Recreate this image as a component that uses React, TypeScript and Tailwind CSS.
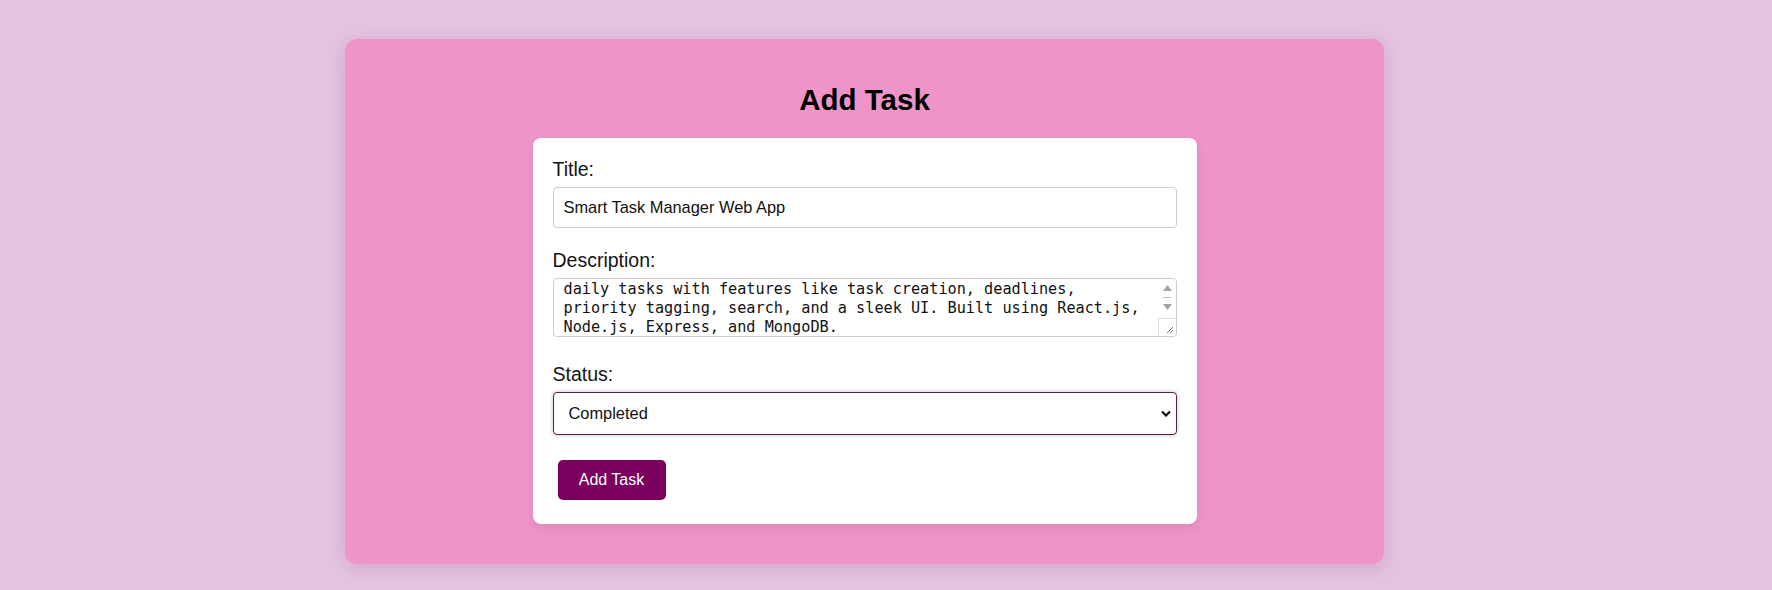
import { useEffect, useRef } from "react";

const description =
  "A full-stack web application that helps users organize their daily tasks with features like task creation, deadlines, priority tagging, search, and a sleek UI. Built using React.js, Node.js, Express, and MongoDB.";

export default function App() {
  const descRef = useRef<HTMLTextAreaElement>(null);

  // textarea is scrolled down one line in the screenshot
  useEffect(() => {
    if (descRef.current) descRef.current.scrollTop = 28;
  }, []);

  return (
    <div className="min-h-[590px] bg-[#e4c3e1] pl-[345px] pt-[39px] pb-[26px] font-['Liberation_Sans',Arial,sans-serif]">
      {/* Tarjeta rosa */}
      <div className="w-[1039px] rounded-xl bg-[#ee94c8] pt-[44px] pb-[40px] shadow-[0_4px_18px_rgba(120,40,100,0.18)]">
        <h2 className="text-center text-[29.5px] font-bold leading-[34px] text-black">Add Task</h2>

        {/* Formulario */}
        <form className="mx-auto mt-[21px] w-[664px] rounded-lg bg-white px-5 pt-5 pb-6 shadow-[0_4px_10px_rgba(0,0,0,0.08)]">
          <label className="block text-[19.5px] leading-[22px] text-[#141414]">Title:</label>
          <input
            type="text"
            defaultValue="Smart Task Manager Web App"
            className="mt-[7px] block h-[41px] w-full rounded-[4px] border border-[#cccccc] bg-white px-[10px] text-[16.4px] text-[#111] outline-none"
          />

          <label className="mt-[21px] block text-[19.5px] leading-[22px] text-[#141414]">Description:</label>
          <div className="relative mt-[7px] h-[59px]">
            <textarea
              ref={descRef}
              defaultValue={description}
              className="block h-[59px] w-full resize-none overflow-hidden rounded-[4px] border border-[#cccccc] bg-white py-[10px] pl-[10px] pr-[27px] font-['DejaVu_Sans_Mono',monospace] text-[15.2px] leading-[19px] text-[#111] outline-none [scrollbar-width:none]"
            />
            {/* Barra de scroll */}
            <div className="absolute top-[1px] right-[1px] bottom-[1px] flex w-[17px] flex-col items-center rounded-r-[3px] bg-white">
              <svg width="9" height="6" viewBox="0 0 9 6" className="mt-[6px]">
                <path d="M0 6 L4.5 0 L9 6 Z" fill="#a3a3a3" />
              </svg>
              <div className="mt-[6px] h-px w-[8px] bg-[#bdbdbd]" />
              <svg width="9" height="6" viewBox="0 0 9 6" className="mt-[6px]">
                <path d="M0 0 L4.5 6 L9 0 Z" fill="#a3a3a3" />
              </svg>
              <div className="mt-auto flex h-[18px] w-[18px] items-end justify-end border-t border-l border-[#dcdcdc]">
                <svg width="8" height="8" viewBox="0 0 8 8" className="mb-[2px] mr-[2px]">
                  <path d="M1 7 L7 1 M4 7 L7 4" stroke="#7a7a7a" strokeWidth="1" />
                </svg>
              </div>
            </div>
          </div>

          <label className="mt-[26px] block text-[19.5px] leading-[22px] text-[#141414]">Status:</label>
          <div className="relative mt-[7px] h-[43px]">
            <select
              defaultValue="Completed"
              className="block h-[43px] w-full appearance-none rounded-[4px] border border-[#5a1f4e] bg-white pl-[15px] text-[16.4px] text-[#111] shadow-[0_0_4px_rgba(0,0,0,0.25)] outline-none"
            >
              <option>Pending</option>
              <option>In Progress</option>
              <option>Completed</option>
            </select>
            <svg width="10" height="7" viewBox="0 0 10 7" className="pointer-events-none absolute top-[18px] right-[6px]">
              <path d="M1 1.5 L5 5.5 L9 1.5" fill="none" stroke="#111" strokeWidth="2.2" />
            </svg>
          </div>

          <button
            type="button"
            className="mt-[25px] ml-[5px] h-10 w-[108px] rounded-[5px] bg-[#7a005e] text-[16px] text-white"
          >
            Add Task
          </button>
        </form>
      </div>
    </div>
  );
}
